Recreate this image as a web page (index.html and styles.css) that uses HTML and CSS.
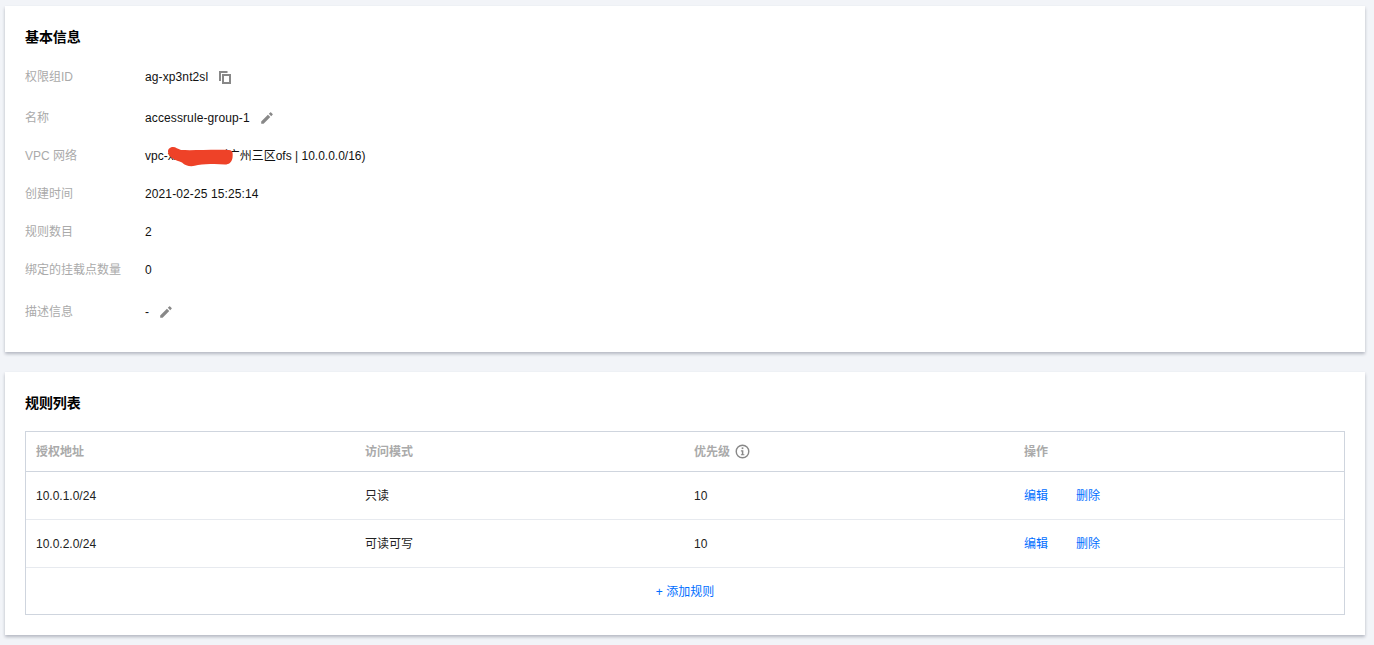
FILE: index.html
```
<!DOCTYPE html>
<html lang="zh">
<head>
<meta charset="utf-8">
<title>权限组详情</title>
<link rel="stylesheet" href="styles.css">
</head>
<body>
<section class="card">
  <h2 class="title">基本信息</h2>
  <div class="info">
    <div class="row row-first"><div class="label">权限组ID</div><div class="value"><span>ag-xp3nt2sl</span><svg class="icon icon-copy" viewBox="0 0 12 13"><path d="M0 0H8.500V2H2V10H0Z" fill="#888"/><path fill-rule="evenodd" d="M3 3H12V13H3ZM5 5V11H10V5Z" fill="#888"/></svg></div></div>
    <div class="row row-second"><div class="label">名称</div><div class="value"><span>accessrule-group-1</span><svg class="icon icon-edit" viewBox="0 0 12 12"><path d="M0.2 9.4V11.8H2.6L9.3 5.1 6.9 2.7ZM11.6 2.8C11.9 2.5 11.9 2.1 11.6 1.9L10.1 0.4C9.9 0.1 9.5 0.1 9.2 0.4L7.8 1.8 10.2 4.2Z" fill="#888"/></svg></div></div>
    <div class="row"><div class="label">VPC 网络</div><div class="value value-vpc"><span>vpc-xxxxxxxx（广州三区ofs | 10.0.0.0/16)</span><svg class="redaction" viewBox="0 0 66 20"><path d="M0 4.500C0 1.500 2.500 0 5 0 8 0 9.500 2 13 3 25 3.500 45 2.500 61 3 65 3.500 65 6 64.500 11 63.500 15.500 61 17.500 57 17.500 48 16.500 38 17 30 18 24 20 18 19.500 14 15.500 8 13 0 11 0 4.500Z" fill="#ee4228"/></svg></div></div>
    <div class="row"><div class="label">创建时间</div><div class="value"><span>2021-02-25 15:25:14</span></div></div>
    <div class="row"><div class="label">规则数目</div><div class="value"><span>2</span></div></div>
    <div class="row"><div class="label">绑定的挂载点数量</div><div class="value"><span>0</span></div></div>
    <div class="row row-last"><div class="label">描述信息</div><div class="value"><span>-</span><svg class="icon icon-edit" viewBox="0 0 12 12"><path d="M0.2 9.4V11.8H2.6L9.3 5.1 6.9 2.7ZM11.6 2.8C11.9 2.5 11.9 2.1 11.6 1.9L10.1 0.4C9.9 0.1 9.5 0.1 9.2 0.4L7.8 1.8 10.2 4.2Z" fill="#888"/></svg></div></div>
  </div>
</section>
<section class="card card-rules">
  <h2 class="title title-rules">规则列表</h2>
  <table class="rules">
    <colgroup><col class="col"><col class="col"><col class="col"><col></colgroup>
    <thead>
      <tr>
        <th>授权地址</th>
        <th>访问模式</th>
        <th><span class="th-inner"><span>优先级</span><svg class="icon-info" viewBox="0 0 16 16"><circle cx="8" cy="8" r="6.700" fill="none" stroke="#888" stroke-width="1.500"/><rect x="7.100" y="3.600" width="1.800" height="1.800" fill="#888"/><path d="M6.300 6.700H8.900V10.800H10V12.100H6.300V10.800H7.300V8H6.300Z" fill="#888"/></svg></span></th>
        <th>操作</th>
      </tr>
    </thead>
    <tbody>
      <tr class="rule">
        <td>10.0.1.0/24</td><td>只读</td><td>10</td>
        <td><a class="link" href="#">编辑</a><a class="link" href="#">删除</a></td>
      </tr>
      <tr class="rule">
        <td>10.0.2.0/24</td><td>可读可写</td><td>10</td>
        <td><a class="link" href="#">编辑</a><a class="link" href="#">删除</a></td>
      </tr>
      <tr class="add">
        <td colspan="4"><a class="link link-add" href="#">+ 添加规则</a></td>
      </tr>
    </tbody>
  </table>
</section>
</body>
</html>
```
FILE: styles.css
```
* { box-sizing: border-box; }
html, body { height: 100%; }
body {
  margin: 0;
  padding: 6px 9px 10px 5px;
  background: #f2f4f8;
  color: #000;
  font: 12px/20px "Liberation Sans", "Noto Sans CJK SC", sans-serif;
  overflow: hidden;
}
.card {
  background: #fff;
  padding: 20px;
  box-shadow: 0 2px 3px 0 rgba(54, 58, 80, 0.32);
}
.card-rules { margin-top: 20px; }
.title {
  margin: 0 0 9px;
  font-size: 14px;
  line-height: 22px;
  font-weight: 700;
  letter-spacing: -0.1px;
}
.title-rules { margin-bottom: 17px; }
.info { margin-bottom: -2px; }
.row { display: flex; padding: 9px 0; }
.row-first { padding: 10px 0; }
.row-second { padding: 11px 0 9px; }
.row-last { padding: 13px 0 12px; }
.label { width: 120px; color: #aaa; flex: none; }
.value { position: relative; display: flex; align-items: center; color: #111; letter-spacing: 0.11px; }
.value-vpc { letter-spacing: 0; }
.icon { width: 12px; height: 12px; flex: none; }
.icon-copy { margin-left: 11px; margin-top: 1px; height: 13px; }
.icon-edit { margin-left: 11px; }
.redaction { position: absolute; left: 23px; top: 1px; width: 66px; height: 20px; }
.rules {
  width: 100%;
  table-layout: fixed;
  border-collapse: separate;
  border-spacing: 0;
  border: 1px solid #cfd5de;
}
.col { width: 329px; }
.rules th {
  height: 40px;
  padding: 0 10px;
  text-align: left;
  font-weight: 700;
  color: #aaa;
  border-bottom: 1px solid #cfd5de;
}
.rules th:last-child, .rule td:last-child { padding-left: 11px; }
.th-inner { display: inline-flex; align-items: center; gap: 5px; }
.icon-info { width: 15px; height: 15px; flex: none; }
.rules td {
  padding: 0 10px;
  color: #222;
  border-bottom: 1px solid #e7eaef;
}
.rule td { height: 48px; }
.rules .add td { height: 46px; padding-top: 2px; text-align: center; border-bottom: 0; }
.link { color: #006eff; text-decoration: none; margin-right: 28px; }
.link-add { margin-right: 0; }
```
